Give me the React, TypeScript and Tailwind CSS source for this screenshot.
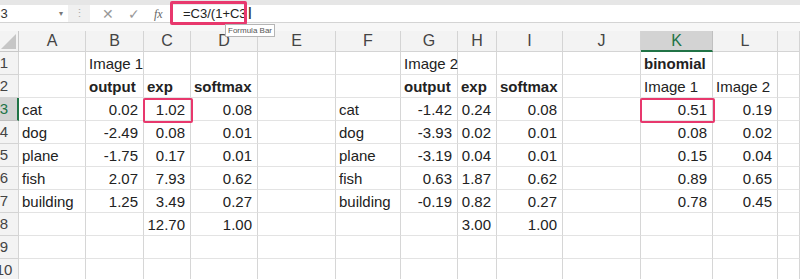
import React from "react";

const cols = ["A", "B", "C", "D", "E", "F", "G", "H", "I", "J", "K", "L", ""];

type Cell = { t: string; b?: boolean; r?: boolean };

const R = (t: string): Cell => ({ t, r: true });
const L = (t: string): Cell => ({ t });
const B = (t: string): Cell => ({ t, b: true });
const E: Cell = { t: "" };

const rows: Cell[][] = [
	[E, L("Image 1"), E, E, E, E, L("Image 2"), E, E, E, B("binomial"), E, E],
	[E, B("output"), B("exp"), B("softmax"), E, E, B("output"), B("exp"), B("softmax"), E, L("Image 1"), L("Image 2"), E],
	[L("cat"), R("0.02"), R("1.02"), R("0.08"), E, L("cat"), R("-1.42"), R("0.24"), R("0.08"), E, R("0.51"), R("0.19"), E],
	[L("dog"), R("-2.49"), R("0.08"), R("0.01"), E, L("dog"), R("-3.93"), R("0.02"), R("0.01"), E, R("0.08"), R("0.02"), E],
	[L("plane"), R("-1.75"), R("0.17"), R("0.01"), E, L("plane"), R("-3.19"), R("0.04"), R("0.01"), E, R("0.15"), R("0.04"), E],
	[L("fish"), R("2.07"), R("7.93"), R("0.62"), E, L("fish"), R("0.63"), R("1.87"), R("0.62"), E, R("0.89"), R("0.65"), E],
	[L("building"), R("1.25"), R("3.49"), R("0.27"), E, L("building"), R("-0.19"), R("0.82"), R("0.27"), E, R("0.78"), R("0.45"), E],
	[E, E, R("12.70"), R("1.00"), E, E, E, R("3.00"), R("1.00"), E, E, E, E],
	[E, E, E, E, E, E, E, E, E, E, E, E, E],
	[E, E, E, E, E, E, E, E, E, E, E, E, E],
];

const gridCols = "grid grid-cols-[19px_67px_58px_47px_67px_78px_65px_57px_39px_66px_78px_72px_65px_1fr]";

const App = () => {
	return (
		<div className="relative w-[800px] h-[279px] overflow-hidden bg-white text-[#222] font-['Liberation_Sans',Arial,sans-serif]">
			{/* formula bar */}
			<div className="h-[5px] bg-[#e6e6e6]" />
			<div className="flex h-[18px] bg-[#f0f0f0] border-b border-[#d4d4d4]">
				<div className="w-[68px] bg-white flex items-center justify-between overflow-hidden">
					<span className="-ml-[9px] text-[13px] text-[#333]">C3</span>
					<span className="text-[8px] text-[#777] mr-[5px]">▾</span>
				</div>
				<div className="w-[22px] flex items-center justify-center text-[#aaa] text-[11px]">⋮</div>
				<div className="w-[80px] bg-white flex items-center text-[#999]">
					<span className="ml-[12px] text-[14px] leading-none">✕</span>
					<span className="ml-[14px] text-[14px] leading-none">✓</span>
					<span className="ml-[14px] text-[12px] italic font-['Liberation_Serif',serif] text-[#666]">fx</span>
				</div>
				<div className="flex-1 bg-white ml-[1px] flex items-center">
					<span className="ml-[12px] text-[13px] text-[#222]">=C3/(1+C3</span>
					<span className="ml-[1px] text-[16px] leading-none text-[#333] font-['DejaVu_Sans',sans-serif]">I</span>
				</div>
			</div>
			<div className="h-[8px] bg-[#f7f7f7]" />

			{/* grid */}
			<div className={gridCols}>
				<div className="h-[21px] bg-[#f3f3f3] border-r border-b border-[#c8c8c8] relative overflow-hidden">
					<div className="absolute right-[2px] bottom-[2px] w-0 h-0 border-l-[15px] border-l-transparent border-b-[15px] border-b-[#c6c6c6]" />
				</div>
				{cols.map((c, i) =>
					c === "K" ? (
						<div
							key={i}
							className="h-[21px] bg-[#d3d3d3] border-r border-[#c0c0c0] border-b-2 border-b-[#217346] flex items-center justify-center text-[16px] text-[#217346]"
						>
							{c}
						</div>
					) : (
						<div
							key={i}
							className="h-[21px] bg-[#f3f3f3] border-r border-b border-[#d4d4d4] flex items-center justify-center text-[16px] text-[#444]"
						>
							{c}
						</div>
					)
				)}

				{rows.map((row, ri) => (
					<React.Fragment key={ri}>
						{ri === 2 ? (
							<div className="h-[23px] bg-[#d3d3d3] border-r-2 border-r-[#217346] border-b border-[#c0c0c0] overflow-hidden">
								<div className="-ml-[10px] w-[28px] text-center text-[15px] leading-[22px] text-[#217346]">{ri + 1}</div>
							</div>
						) : (
							<div className="h-[23px] bg-[#f3f3f3] border-r border-b border-[#d4d4d4] overflow-hidden">
								<div className="-ml-[10px] w-[28px] text-center text-[15px] leading-[22px] text-[#444]">{ri + 1}</div>
							</div>
						)}
						{row.map((cell, ci) => (
							<div
								key={ci}
								className={`h-[23px] border-r border-r-[#d6d6d6] border-b border-b-[#e3e3e3] text-[15px] leading-[23px] whitespace-nowrap ${
									cell.r ? "text-right pr-[5px]" : "pl-[3px]"
								} ${cell.b ? "font-bold" : ""}`}
							>
								{cell.t}
							</div>
						))}
					</React.Fragment>
				))}
			</div>

			{/* highlights */}
			<div className="absolute left-[170px] top-[1px] w-[77px] h-[24px] border-[3px] border-[#e8386d] rounded-[2px]" />
			<div className="absolute left-[143px] top-[98px] w-[50px] h-[25px] border-[2px] border-[#e8386d] rounded-[2px]" />
			<div className="absolute left-[640px] top-[98px] w-[75px] h-[25px] border-[2px] border-[#e8386d] rounded-[2px]" />

			{/* tooltip */}
			<div className="absolute left-[225px] top-[24px] px-[2px] h-[13px] bg-white border border-[#b5b5b5] text-[8px] leading-[11px] text-[#555]">
				Formula Bar
			</div>
		</div>
	);
};

export default App;
